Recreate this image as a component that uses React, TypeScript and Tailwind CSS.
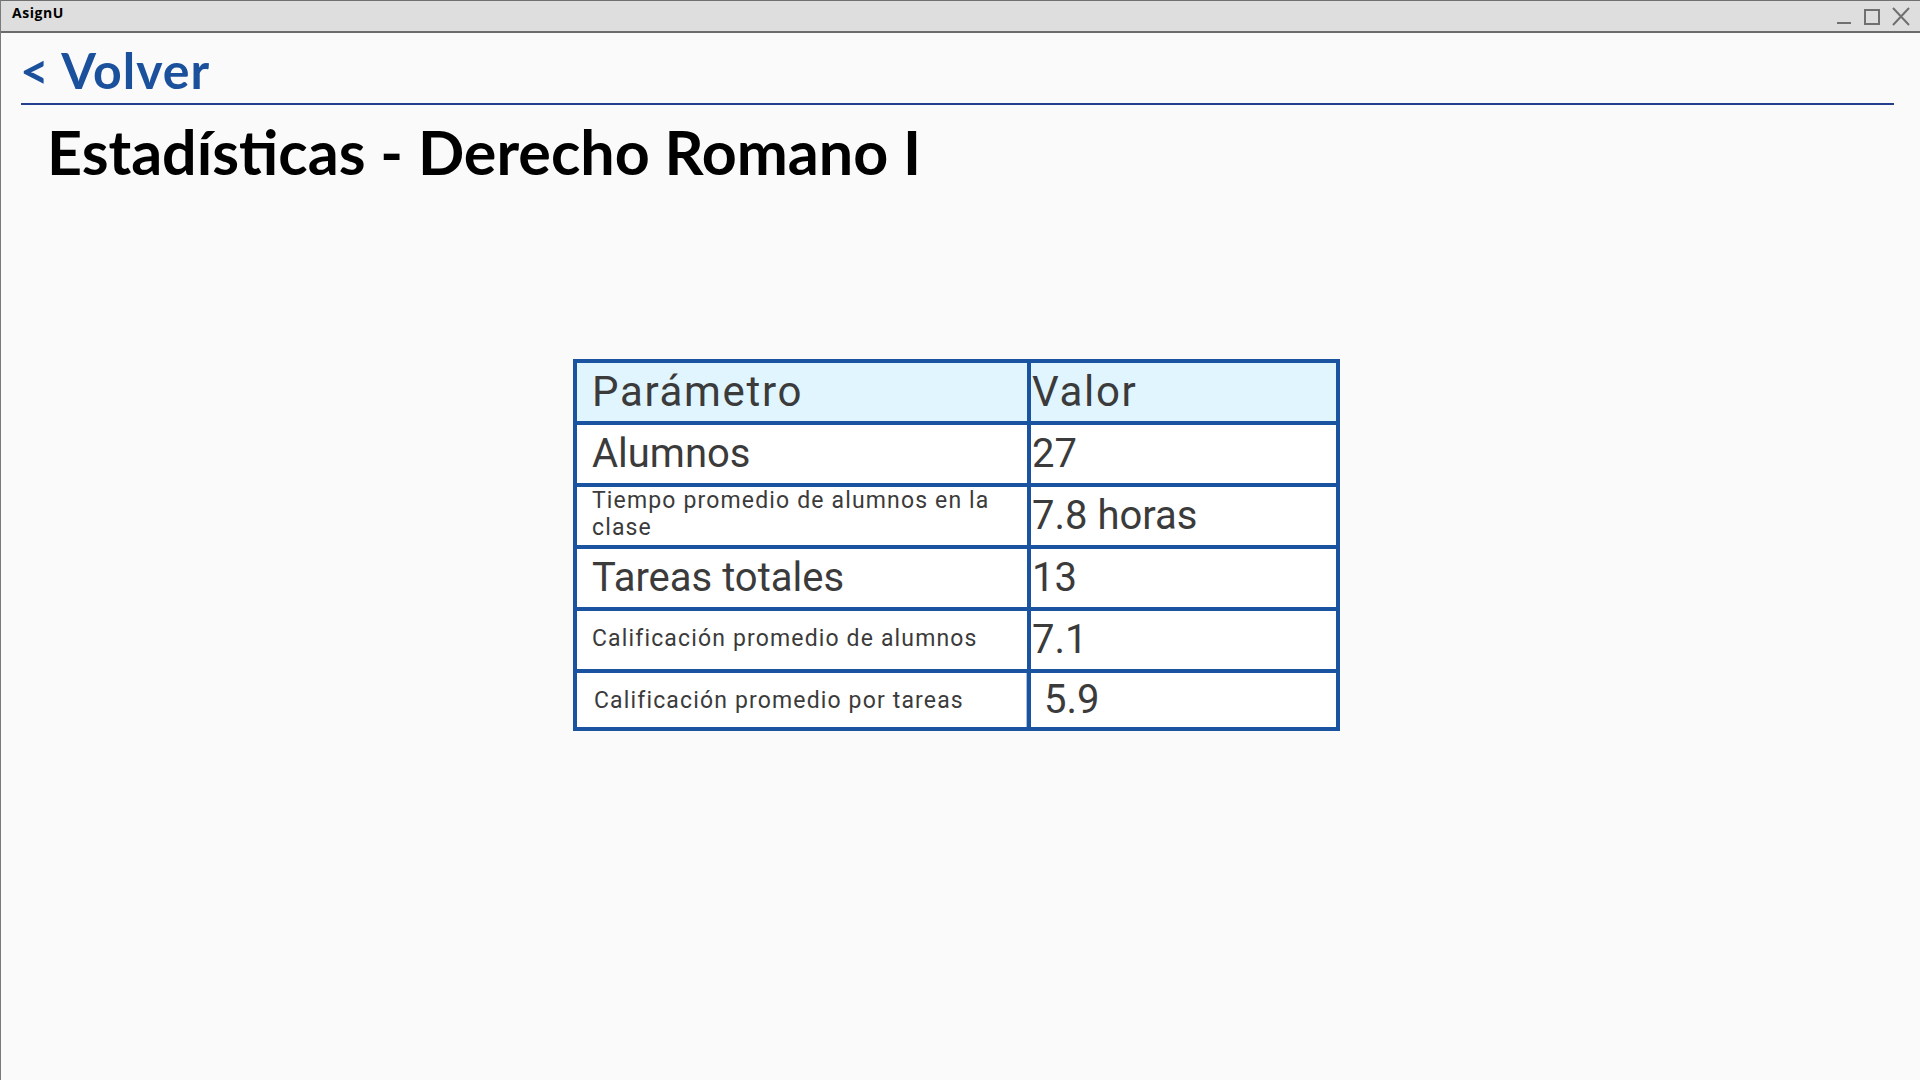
import type { ReactNode } from 'react';

/** Statistics screen for a course: title bar, back link, heading and a two-column table. */

const border = 'border-[#1a53a0]';

interface Row {
  readonly label: string;
  readonly value: string;
  /** Smaller label text (long labels). */
  readonly small?: boolean;
}

const rows: Row[] = [
  { label: 'Alumnos', value: '27' },
  { label: 'Tiempo promedio de alumnos en la clase', value: '7.8 horas', small: true },
  { label: 'Tareas totales', value: '13' },
  { label: 'Calificación promedio de alumnos', value: '7.1', small: true },
];

const head = 'text-[42px] leading-[48px] tracking-[0.04em]';
const big = 'text-[40px] leading-[48px]';
const small = 'text-[23px] leading-[27px] tracking-[0.05em]';

function Cell({ className, children }: { className?: string; children: ReactNode }) {
  return (
    <div className={`flex items-center border-r-4 border-b-4 ${border} ${className ?? ''}`}>
      {children}
    </div>
  );
}

function TitleBar() {
  return (
    <div className="flex h-[33px] shrink-0 items-start justify-between border-t border-b-2 border-t-[#707070] border-b-[#6b6b6b] bg-[#dedede]">
      <span className="ml-[11px] mt-[2px] font-['Open_Sans',sans-serif] text-[14px] font-bold leading-[19px] tracking-[0.04em] text-black">
        AsignU
      </span>
      <div className="mr-[9px] flex pt-[5px] text-[#707070]">
        <svg width="16" height="20" viewBox="0 0 16 20" fill="none" stroke="currentColor" strokeWidth="2">
          <path d="M1 17h14" />
        </svg>
        <svg className="ml-[11px]" width="18" height="20" viewBox="0 0 18 20" fill="none" stroke="currentColor" strokeWidth="2">
          <rect x="2" y="4" width="14" height="14" />
        </svg>
        <svg className="ml-[10px]" width="20" height="20" viewBox="0 0 20 20" fill="none" stroke="currentColor" strokeWidth="2">
          <path d="M2 2l16 17M18 2L2 19" />
        </svg>
      </div>
    </div>
  );
}

export default function App() {
  return (
    <div className="flex h-screen w-full flex-col overflow-hidden border-l border-l-[#7a7a7a] bg-[#fafafa]">
      <TitleBar />

      <a className="ml-[19px] mt-[7px] block w-max font-['Lato',sans-serif] text-[50px] font-bold leading-[60px] tracking-[0.02em] text-[#1b519c]">
        &lt; Volver
      </a>
      <div className="ml-[20px] mr-[26px] mt-[3px] h-[2px] bg-[#253e8e]" />

      <h1 className="ml-[46px] mt-[10px] font-['Lato',sans-serif] text-[61px] font-bold leading-[73px] text-black">
        Estadísticas - Derecho Romano I
      </h1>

      <div
        className={`ml-[572px] mt-[171px] grid w-[767px] grid-cols-[454px_309px] border-t-4 border-l-4 ${border} bg-white font-['Roboto',sans-serif] text-[#3b3b3b]`}
      >
        <Cell className={`h-[62px] bg-[#e1f5fe] pl-[15px] ${head}`}>Parámetro</Cell>
        <Cell className={`h-[62px] bg-[#e1f5fe] pl-[1px] ${head}`}>Valor</Cell>

        {rows.map((r) => (
          <RowCells key={r.label} row={r} />
        ))}

        <Cell className={`h-[58px] pl-[17px] shadow-[inset_-1px_0_0_#a9bfdf] ${small}`}>
          Calificación promedio por tareas
        </Cell>
        <Cell className={`h-[58px] pl-[13px] ${big}`}>5.9</Cell>
      </div>
    </div>
  );
}

function RowCells({ row }: { row: Row }) {
  return (
    <>
      <Cell className={`h-[62px] pl-[15px] pr-[10px] ${row.small ? `${small} pb-[4px]` : big}`}>
        {row.label}
      </Cell>
      <Cell className={`h-[62px] pl-[1px] ${big}`}>{row.value}</Cell>
    </>
  );
}
